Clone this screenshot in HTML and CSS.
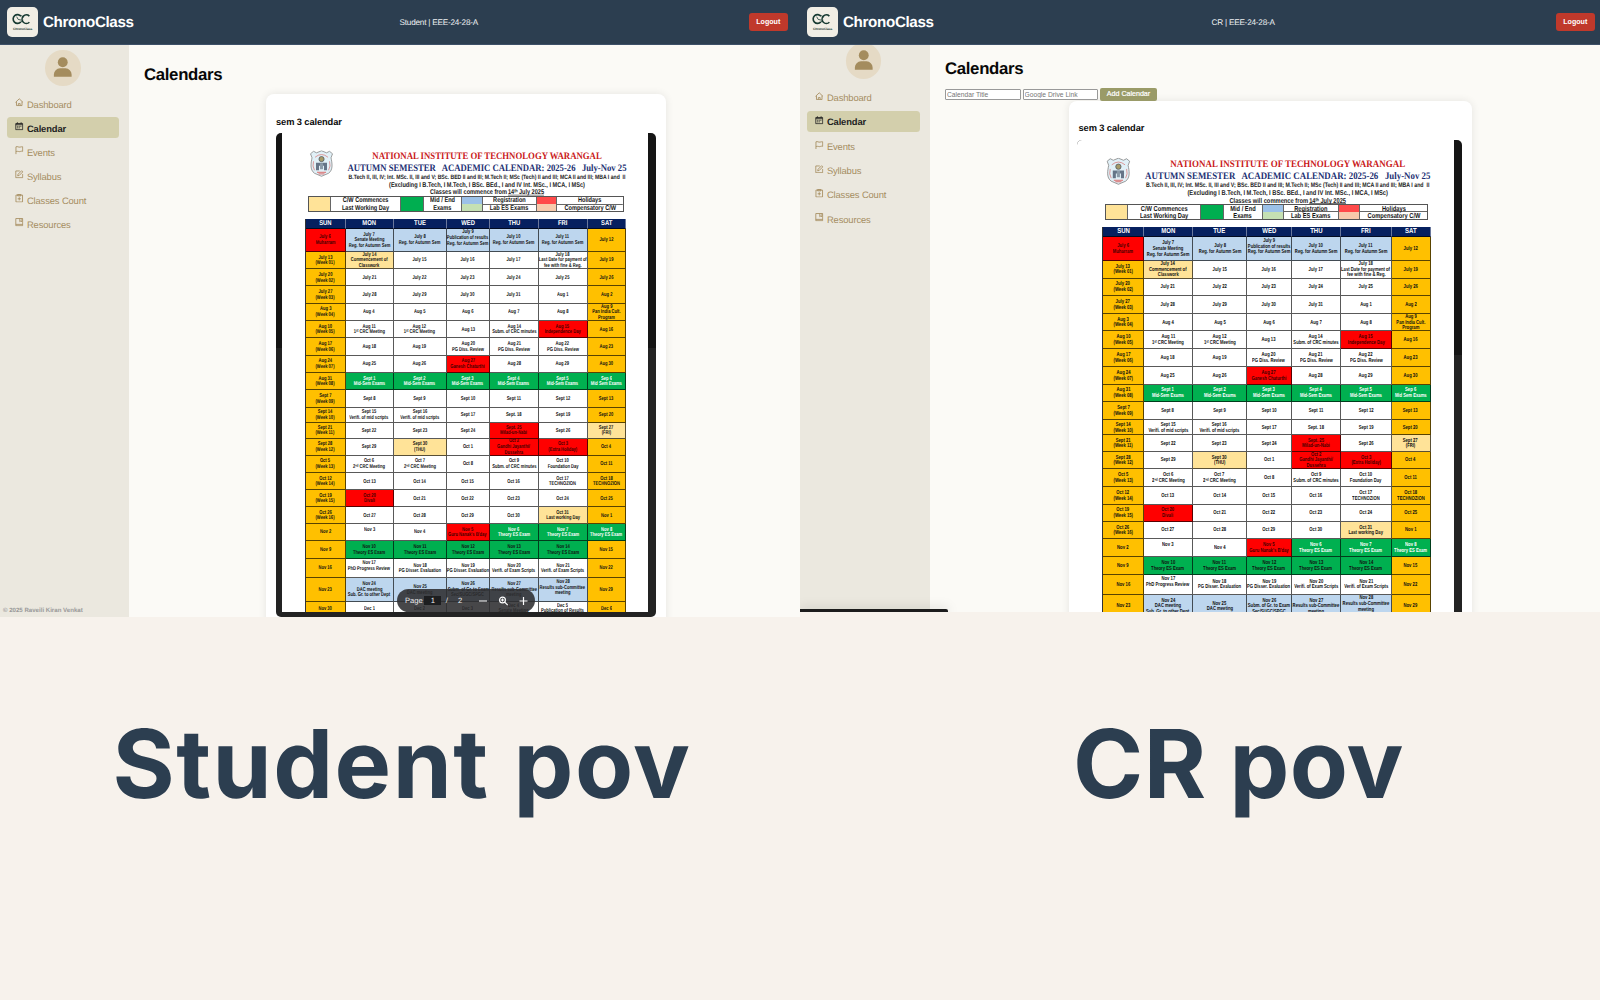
FILE: index.html
```html
<!DOCTYPE html>
<html lang="en">
<head>
<meta charset="utf-8">
<title>ChronoClass</title>
<link rel="stylesheet" href="styles.css">
</head>
<body>
<svg class="defs" width="0" height="0" aria-hidden="true">
  <symbol id="logo" viewBox="0 0 30 30">
    <path d="M13.8 9.2A4.3 4.3 0 1 0 13.6 14.6M22 9A4.2 4.2 0 1 0 22 15" fill="none" stroke="#173a32" stroke-width="1.6"/>
    <path d="M9.5 9.5l1.5 2.7 3.3.8M14 8.5l2.6 1.5M13.5 15l2.5-2" fill="none" stroke="#173a32" stroke-width=".8"/>
    <text x="5.8" y="22.6" textLength="19" class="logo-text">ChronoClass</text>
  </symbol>
  <symbol id="user" viewBox="0 0 36 36"><circle cx="18" cy="12.4" r="5"/><path d="M9 27.2v-2.4a6.2 6.2 0 0 1 6.2-6.2h5.6a6.2 6.2 0 0 1 6.2 6.2v2.4z"/></symbol>
  <symbol id="home" viewBox="0 0 16 16"><path d="M1 8.2L8 1.5l7 6.7M2.8 7v7.3h10.4V7M6.3 14v-3.5h3.4V14"/></symbol>
  <symbol id="cal" viewBox="0 0 16 16"><path d="M1.5 2.8h13v11.7h-13zM1.5 5h13M4.5.5v3M11.5.5v3M4 8h2M7 8h2M10 8h2M4 11h2M7 11h2"/></symbol>
  <symbol id="flag" viewBox="0 0 16 16"><path d="M1.8 15.5V1.5c3-1.3 5 1.3 7.500.6 2-.6 3.600-.8 5.200-.6v8.500c-3-.8-4.500.8-6.500.6-2.500-.4-3.700-1-6.200 0"/></symbol>
  <symbol id="edit" viewBox="0 0 16 16"><path d="M9 1.800H1.500v12.700h13V7.500M5 11l.8-3L12.500 1.300l2.200 2.200L8 10.200z"/></symbol>
  <symbol id="count" viewBox="0 0 16 16"><path d="M1.800 2h12.400v13H1.800zM4.800 1h6.400v2.500H4.800zM8 6v6M5 9h6"/></symbol>
  <symbol id="book" viewBox="0 0 16 16"><path d="M1.500 1h13v13.500h-13zM1.500 12h13M9 1v6l2-1.500L13 7V1"/></symbol>
  <symbol id="crest" viewBox="0 0 24 27">
    <path d="M1 3.500L4 1l3 1.500L12 .5l5 2L20 1l3 2.500-1.500 4c1 5 2.500 12-2.500 15.500L12 26l-7-3C0 19.500 1.500 12.500 2.500 7.500z" fill="#e1f0f7" stroke="#777" stroke-width=".7"/>
    <path d="M5.500 7Q12 1.500 18.500 7M4 11q-1.500 5 1 9M20 11q1.500 5-1 9" fill="none" stroke="#d98282" stroke-width=".8"/>
    <circle cx="12" cy="8.800" r="2.600" fill="#a69a68" stroke="#46505e" stroke-width=".7"/>
    <path d="M6.500 12.500h11V20h-3v-4.500h-5V20h-3z" fill="#657487"/><path d="M10.500 13h3v6h-3z" fill="#8b9aa8"/>
    <path d="M7.500 22h9M9 23.600h6" stroke="#d96c6c"/>
  </symbol>
  <symbol id="letterhead" viewBox="0 0 366 62.7">
    <use href="#crest" x="27.500" y="17.300" width="24" height="27"/>
    <g class="lh-serif">
      <text x="90.300" y="26.100" textLength="229.500" lengthAdjust="spacingAndGlyphs" class="lh-red">NATIONAL INSTITUTE OF TECHNOLOGY WARANGAL</text>
      <text x="65.500" y="38.400" textLength="279" lengthAdjust="spacingAndGlyphs" class="lh-blue">AUTUMN SEMESTER &#160; ACADEMIC CALENDAR: 2025-26 &#160; July-Nov 25</text>
    </g>
    <g class="lh-sans">
      <text x="66.500" y="46" textLength="277" lengthAdjust="spacingAndGlyphs" class="lh-small">B.Tech II, III, IV; Int. MSc. II, III and V; BSc. BED II and III; M.Tech II; MSc (Tech) II and III; MCA II and III; MBA I and &#160;II</text>
      <text x="107" y="53.900" textLength="196" lengthAdjust="spacingAndGlyphs">(Excluding I B.Tech, I M.Tech, I BSc. BEd., I and IV Int. MSc., I MCA, I MSc)</text>
      <text x="148" y="61.300" textLength="77" lengthAdjust="spacingAndGlyphs">Classes will commence from</text>
      <text x="226" y="61.300" textLength="36" lengthAdjust="spacingAndGlyphs">14ᵗʰ July 2025</text>
      <path d="M226 62.200h36" stroke="#222" stroke-width=".7"/>
    </g>
  </symbol>
</svg>

<section class="half student">
  <div class="screen">
    <header class="topbar">
      <svg class="logo"><use href="#logo"/></svg><strong class="brand">ChronoClass</strong>
      <span class="who">Student | EEE-24-28-A</span><button class="logout">Logout</button>
    </header>
    <div class="body">
      <aside class="side">
        <svg class="avatar"><use href="#user"/></svg>
        <nav class="nav">
          <a><svg><use href="#home"/></svg>Dashboard</a>
          <a class="on"><svg><use href="#cal"/></svg>Calendar</a>
          <a><svg><use href="#flag"/></svg>Events</a>
          <a><svg><use href="#edit"/></svg>Syllabus</a>
          <a><svg><use href="#count"/></svg>Classes Count</a>
          <a><svg><use href="#book"/></svg>Resources</a>
        </nav>
        <footer class="copy">© 2025 Raveili Kiran Venkat</footer>
      </aside>
      <main class="main">
        <h1>Calendars</h1>
        <article class="card">
          <h2>sem 3 calendar</h2>
          <div class="viewer">
            <div class="page">
              <svg class="letterhead"><use href="#letterhead"/></svg>
              <div class="legend"></div>
              <div class="table"></div>
            </div>
            <div class="pager"><span>Page</span><b>1</b><span>/</span><span class="total">2</span>
              <svg viewBox="0 0 51 12"><path d="M1 6h8M41.500 6h8M45.500 2v8"/><circle cx="24.500" cy="5" r="2.900"/><path d="M26.700 7.200l3 3M23 5h3M24.500 3.500v3"/></svg>
            </div>
          </div>
        </article>
      </main>
    </div>
  </div>
  <p class="caption">Student pov</p>
</section>

<section class="half cr">
  <div class="screen">
    <header class="topbar">
      <svg class="logo"><use href="#logo"/></svg><strong class="brand">ChronoClass</strong>
      <span class="who">CR | EEE-24-28-A</span><button class="logout">Logout</button>
    </header>
    <div class="body">
      <aside class="side">
        <svg class="avatar"><use href="#user"/></svg>
        <nav class="nav">
          <a><svg><use href="#home"/></svg>Dashboard</a>
          <a class="on"><svg><use href="#cal"/></svg>Calendar</a>
          <a><svg><use href="#flag"/></svg>Events</a>
          <a><svg><use href="#edit"/></svg>Syllabus</a>
          <a><svg><use href="#count"/></svg>Classes Count</a>
          <a><svg><use href="#book"/></svg>Resources</a>
        </nav>
      </aside>
      <main class="main">
        <h1>Calendars</h1>
        <form class="add"><input placeholder="Calendar Title"><input placeholder="Google Drive Link"><button type="button">Add Calendar</button></form>
        <article class="card">
          <h2>sem 3 calendar</h2>
          <div class="viewer">
            <div class="page">
              <svg class="letterhead"><use href="#letterhead"/></svg>
              <div class="legend"></div>
              <div class="table"></div>
            </div>
          </div>
        </article>
      </main>
    </div>
    <div class="status"></div>
  </div>
  <p class="caption">CR pov</p>
</section>
<script src="calendar.js"></script>
</body>
</html>
```

FILE: calendar.js
```js
// Each row: height, then SUN..SAT. "|" breaks a line; a leading "x:" picks the cell colour.
// A trailing "| " lifts the text above the middle of its cell.
const rows = [
  [10.3, 'h:SUN', 'h:MON', 'h:TUE', 'h:WED', 'h:THU', 'h:FRI', 'h:SAT'],
  [22.7, 'r:July 6|Muharram', 'b:July 7|Senate Meeting|Reg. for Autumn Sem', 'b:July 8|Reg. for Autumn Sem', 'b:July 9|Publication of results|Reg. for Autumn Sem| ', 'b:July 10|Reg. for Autumn Sem', 'b:July 11|Reg. for Autumn Sem', 'July 12'],
  [17.6, 'July 13|(Week 01)', 'c:July 14|Commencement of|Classwork', 'July 15', 'July 16', 'July 17', 'July 18|Last Date for payment of|fee with fine & Reg.', 'July 19'],
  [17, 'July 20|(Week 02)', 'July 21', 'July 22', 'July 23', 'July 24', 'July 25', 'July 26'],
  [17.4, 'July 27|(Week 03)', 'July 28', 'July 29', 'July 30', 'July 31', 'Aug 1', 'Aug 2'],
  [17.3, 'Aug 3|(Week 04)', 'Aug 4', 'Aug 5', 'Aug 6', 'Aug 7', 'Aug 8', 'Aug 9|Pan India Cult.|Program'],
  [17.3, 'Aug 10|(Week 05)', 'Aug 11|1ˢᵗ CRC Meeting', 'Aug 12|1ˢᵗ CRC Meeting', 'Aug 13', 'Aug 14|Subm. of CRC minutes', 'r:Aug 15|Independence Day', 'Aug 16'],
  [17.4, 'Aug 17|(Week 06)', 'Aug 18', 'Aug 19', 'Aug 20|PG Diss. Review', 'Aug 21|PG Diss. Review', 'Aug 22|PG Diss. Review', 'Aug 23'],
  [17.3, 'Aug 24|(Week 07)', 'Aug 25', 'Aug 26', 'r:Aug 27|Ganesh Chaturthi', 'Aug 28', 'Aug 29', 'Aug 30'],
  [17, 'Aug 31|(Week 08)', 'w:Sept 1|Mid-Sem Exams', 'w:Sept 2|Mid-Sem Exams', 'w:Sept 3|Mid-Sem Exams', 'w:Sept 4|Mid-Sem Exams', 'w:Sept 5|Mid-Sem Exams', 'w:Sep 6|Mid Sem Exams'],
  [17.7, 'Sept 7|(Week 09)', 'Sept 8', 'Sept 9', 'Sept 10', 'Sept 11', 'Sept 12', 'Sept 13'],
  [15, 'Sept 14|(Week 10)', 'Sept 15|Verifi. of mid scripts', 'Sept 16|Verifi. of mid scripts', 'Sept 17', 'Sept. 18', 'Sept 19', 'Sept 20'],
  [16, 'Sept 21|(Week 11)', 'Sept 22', 'Sept 23', 'Sept 24', 'r:Sept. 25|Milad-un-Nabi', 'Sept 26', 'c:Sept 27|(FRI)'],
  [17, 'Sept 28|(Week 12)', 'Sept 29', 'c:Sept 30|(THU)', 'Oct 1', 'r:Oct 2|Gandhi Jayanthi/|Dussehra', 'r:Oct 3|(Extra Holiday)', 'Oct 4'],
  [17.3, 'Oct 5|(Week 13)', 'Oct 6|2ⁿᵈ CRC Meeting', 'Oct 7|2ⁿᵈ CRC Meeting', 'Oct 8', 'Oct 9|Subm. of CRC minutes', 'Oct 10|Foundation Day', 'Oct 11'],
  [17.3, 'Oct 12|(Week 14)', 'Oct 13', 'Oct 14', 'Oct 15', 'Oct 16', 'Oct 17|TECHNOZION', 'Oct 18|TECHNOZION'],
  [17, 'Oct 19|(Week 15)', 'r:Oct 20|Divali', 'Oct 21', 'Oct 22', 'Oct 23', 'Oct 24', 'Oct 25'],
  [16.7, 'Oct 26|(Week 16)', 'Oct 27', 'Oct 28', 'Oct 29', 'Oct 30', 'c:Oct 31|Last working Day', 'Nov 1'],
  [17.3, 'Nov 2', 'Nov 3| ', 'Nov 4', "r:Nov 5|Guru Nanak's B'day", 'w:Nov 6|Theory ES Exam', 'w:Nov 7|Theory ES Exam', 'w:Nov 8|Theory ES Exam'],
  [17.7, 'Nov 9', 'g:Nov 10|Theory ES Exam', 'g:Nov 11|Theory ES Exam', 'g:Nov 12|Theory ES Exam', 'g:Nov 13|Theory ES Exam', 'g:Nov 14|Theory ES Exam', 'Nov 15'],
  [19.3, 'Nov 16', 'Nov 17|PhD Progress Review| ', 'Nov 18|PG Disser. Evaluation', 'Nov 19|PG Disser. Evaluation', 'Nov 20|Verifi. of Exam Scripts', 'Nov 21|Verifi. of Exam Scripts', 'Nov 22'],
  [23.4, 'Nov 23', 'b:Nov 24|DAC meeting|Sub. Gr. to other Dept', 'b:Nov 25|DAC meeting', 'b:Nov 26|Subm. of Gr. to Exam|Sec/SUGC/SPGC', 'b:Nov 27|Results sub-Committee|meeting', 'b:Nov 28|Results sub-Committee|meeting| ', 'Nov 29'],
  [14, 'Nov 30', 'Dec 1', 'Dec 2', 'Dec 3', 'Dec 4|Senate Meeting', 'Dec 5|Publication of Results', 'Dec 6']
];
const legend = [['cream', 'C/W Commences|Last Working Day'], ['green', 'Mid / End|Exams'],
  ['blue', 'Registration|Lab ES Exams'], ['red', 'Holidays|Compensatory C/W']];

const lines = s => s.split('|').map(t => t.trim() ? `<span>${t.trim()}</span>` : '<i class="gap"></i>').join('');

document.querySelectorAll('.table').forEach(t => {
  t.innerHTML = rows.map(([h, ...cells]) =>
    `<div class="row" style="--h:${h}">` + cells.map((c, i) => {
      const m = c.match(/^([a-z]):(.*)$/);
      const kind = m ? m[1] : (i === 0 || i === 6 ? 'y' : 'n');
      return `<div class="cell k-${kind}">${lines(m ? m[2] : c)}</div>`;
    }).join('') + '</div>').join('');
});
document.querySelectorAll('.legend').forEach(l => {
  l.innerHTML = legend.map(([k, s]) => `<i class="sw-${k}"></i><div class="lg-${k}">${lines(s)}</div>`).join('');
});
```

FILE: styles.css
```css
* { box-sizing: border-box; }
body {
  margin: 0; width: 1600px; height: 1000px; overflow: hidden;
  display: grid; grid-template-columns: 800px 800px;
  background: #f7f2ec; font-family: "Liberation Sans", Arial, sans-serif;
  text-rendering: geometricPrecision;
}
.defs { position: absolute; }
.half { --u: 1px; overflow: hidden; }
.cr { --u: 1.023px; }
.screen { height: 617px; overflow: hidden; display: flex; flex-direction: column; background: #fbfaf6; position: relative; }
.cr .screen { height: 612px; }

.topbar {
  height: 45px; flex: none; background: #2c3e50; color: #fff; position: relative; z-index: 2;
  display: grid; grid-template-columns: 30.5px 351px 1fr auto; align-items: center; column-gap: 5.5px;
  padding: 0 12px 0 7px; border-bottom: 1px solid #3d5068;
}
.cr .topbar { padding-right: 5px; grid-template-columns: 30.5px 363px 1fr auto; }
.logo { width: 30.5px; height: 30.5px; background: #f1eee5; border-radius: 5px; }
.logo-text { font: bold 3.2px "Liberation Sans", sans-serif; fill: #173a32; }
.brand { font-size: 15.2px; letter-spacing: -.35px; }
.who { font-size: 8.2px; letter-spacing: -.22px; color: #eef0f2; white-space: nowrap; }
.logout { width: 39.5px; height: 18px; border: 0; border-radius: 3px; padding: 0; background: #c0392b; color: #fff; font: bold 7.1px "Liberation Sans", sans-serif; }

.body { flex: 1; min-height: 0; display: flex; }
.side { width: 129px; flex: none; background: #ebe8df; padding: 5px 10.5px 0 7px; display: flex; flex-direction: column; align-items: center; }
.cr .side { width: 130px; margin-top: -2px; padding-top: 0; }
.avatar { width: 35.5px; height: 35.5px; flex: none; border-radius: 50%; background: #e5dac5; fill: #a48c5e; }
.nav { align-self: stretch; margin-top: 7.5px; display: flex; flex-direction: column; gap: 3px; }
.cr .nav { margin-top: 8.2px; gap: 3.3px; }
.nav a { height: 21px; display: flex; align-items: center; gap: 3.4px; padding: 1px 8px 0; border-radius: 3.5px; font-size: 9.4px; letter-spacing: -.12px; color: #a58d5f; }
.nav svg { width: 8.5px; height: 8.5px; margin-top: -3px; fill: none; stroke: currentColor; stroke-width: 1.6px; }
.nav .on { background: #d3cfac; color: #222; font-weight: bold; }
.copy { margin-top: auto; align-self: flex-start; margin-left: -4px; padding-bottom: 3.5px; font-size: 6.1px; font-weight: bold; color: #999; white-space: nowrap; line-height: 7px; }

.main { flex: 1; min-width: 0; padding: 20px 14px 0 15px; }
.cr .main { padding-top: 13.5px; }
h1 { margin: 0; font-size: 16.8px; letter-spacing: -.33px; line-height: 20px; color: #080808; }
.card { width: 399.5px; height: 600px; margin: 9px 0 0 122px; padding: 20.5px 9.5px 0 10px; background: #fff; border-radius: 8px; box-shadow: 0 0 8px rgba(0,0,0,.09); }
h2 { margin: 0; font-size: 9.3px; letter-spacing: -.1px; line-height: 14px; color: #0c0c0c; }
.viewer { margin-top: 4.8px; height: 483.7px; border-radius: 5px; overflow: hidden; position: relative; background: linear-gradient(#151515 0 215px, #232323 215px); padding: 0 8px 5.3px 6px; }
.page { height: 100%; background: #fff; overflow: hidden; }
.cr .card { width: 403px; margin: 0 0 0 124px; padding: 20px 10px 0 8px; }
.cr h2 { padding-left: 1.5px; }
.cr .viewer { margin-top: 5px; padding: 0 8px 0 0; height: 500px; }
.cr .page { padding-left: 1.8px; }

.add { display: flex; align-items: center; gap: 2px; height: 13px; margin-top: 9px; }
.add input { width: 75.5px; height: 11px; border: 1px solid #999; border-radius: 1px; padding: 0 1px; font: 6.7px "Liberation Sans", sans-serif; background: #fff; }
.add button { width: 57px; height: 13px; border: 0; border-radius: 2px; padding: 0; background: #9a9b68; color: #fff; font: 7.1px "Liberation Sans", sans-serif; -webkit-text-stroke: .2px #fff; }

.letterhead { display: block; width: calc(366 * var(--u)); height: calc(62.7 * var(--u)); }
.cr .letterhead { margin-left: -1px; }
.lh-serif { font: bold 9.8px "Liberation Serif", serif; }
.lh-red { fill: #c91818; }
.lh-blue { fill: #1c2f72; }
.lh-sans { font: bold 6.9px "Liberation Sans", sans-serif; fill: #222; }
.lh-small { font-size: 6.3px; }

.legend {
  display: grid; margin: 0 0 calc(6.4 * var(--u)) calc(25.7 * var(--u)); width: calc(316 * var(--u)); height: calc(16.3 * var(--u));
  grid-template-columns: 21fr 71.3fr 22.3fr 38.7fr 20.7fr 54.3fr 20.7fr 67fr;
  grid-template-rows: 100%;
  border: 1px solid #555; font-size: calc(7 * var(--u)); font-weight: bold; line-height: calc(7.8 * var(--u)); color: #151515;
}
.legend div, .cell { display: flex; flex-direction: column; align-items: center; white-space: nowrap; }
.legend > * { min-width: 0; }
.legend > * + * { border-left: 1px solid #666; }
.legend span { transform: scaleX(.8); height: calc(7.6 * var(--u)); }
.sw-cream { background: #ffe398; }
.sw-green { background: #00ae50; }
.sw-blue { background: linear-gradient(#9cc1e8 50%, #c5e0b3 50%); }
.sw-red { background: linear-gradient(#ff4a4a 50%, #f7caac 50%); }
.lg-blue, .lg-red { background: linear-gradient(#666, #666) center / 100% 1px no-repeat; }

.table { margin-left: calc(23 * var(--u)); width: calc(321 * var(--u)); font-size: calc(5.6 * var(--u)); font-weight: bold; line-height: calc(5.6 * var(--u)); border-left: 1px solid #333; }
.row { display: grid; grid-template-columns: 39.7fr 48fr 53fr 43.3fr 48.7fr 49fr 38.3fr; grid-template-rows: 100%; height: calc(var(--h) * var(--u)); }
.cell { min-width: 0; justify-content: center; padding-top: 2.5px; border-right: 1px solid rgba(0,0,0,.65); border-bottom: 1px solid rgba(0,0,0,.65); color: #111; }
.cell span { transform: scaleX(.73); height: calc(5.6 * var(--u)); flex: none; }
.gap { height: calc(4.6 * var(--u)); flex: none; }
.k-h { background: #06205f; color: #fff; padding-top: 1.2px; font-size: calc(7 * var(--u)); border-right-color: #69779c; }
.k-h span { transform: scaleX(.84); }
.k-y { background: #ffc000; }
.k-r { background: #f00; color: #400; }
.k-b { background: #bdd6ee; }
.k-c { background: #ffe398; }
.k-g { background: #00b050; }
.k-w { background: #00b050; color: #fff; }

/* page control floating over the document */
.pager { position: absolute; left: 121px; top: 456px; width: 138px; height: 22.5px; border-radius: 11.5px; background: rgba(45,46,48,.88); color: #eee; font-size: 7.6px; display: flex; align-items: center; padding: 0 0 0 8px; }
.pager b { font-weight: normal; background: #1d1e20; width: 17px; text-align: center; margin: 0 4.5px 0 1.5px; line-height: 9px; }
.pager .total { margin: 0 16px 0 10px; }
.pager svg { width: 51px; height: 12px; flex: none; fill: none; stroke: #fff; stroke-width: 1.2; }

.status { position: absolute; left: 0; bottom: 0; width: 148px; height: 3px; background: #1c1c1c; border-radius: 0 2px 0 0; box-shadow: 0 0 12px rgba(0,0,0,.25); }

.caption { margin: 80px 0 0; padding-left: 4px; text-align: center; font: 700 95px/134px Inter, sans-serif; letter-spacing: 1.5px; color: #2c3e50; white-space: nowrap; }
.cr .caption { margin-top: 85px; padding-left: 77px; letter-spacing: .4px; }
```
